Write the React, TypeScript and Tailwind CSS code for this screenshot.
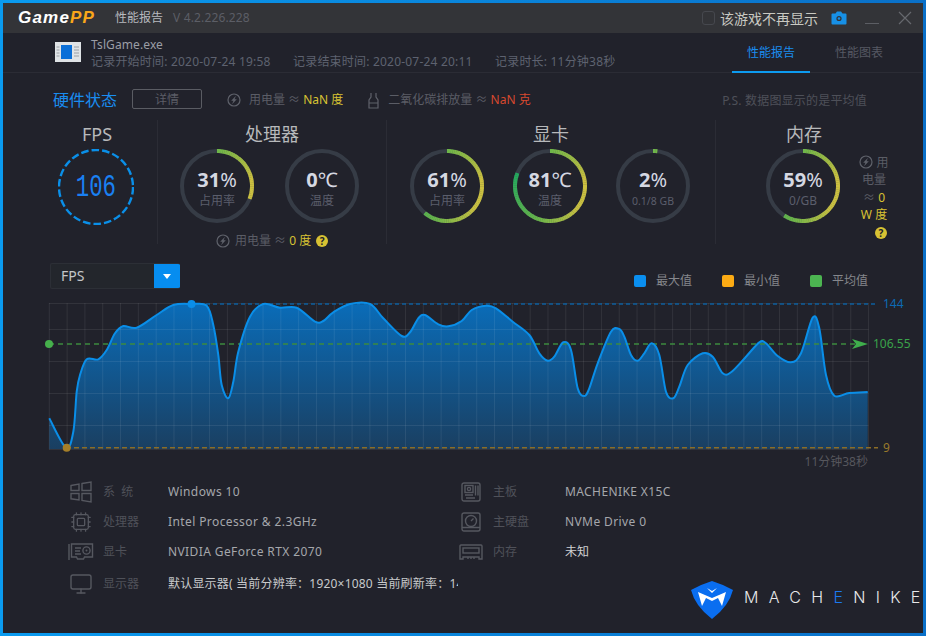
import { Cpu, Monitor } from "lucide-react";
import type { ReactNode } from "react";

const font = "font-['Noto_Sans','Noto_Sans_CJK_SC',sans-serif]";

// chart points, in page coordinates
const pts: [number, number][] = [
  [49.3, 418.3], [66, 447.7], [73.3, 431.7], [76.7, 391.7], [80, 375], [86.7, 359.3], [98.3, 359.3], [106.7, 350],
  [115, 333.3], [123.3, 326], [136.7, 327.7], [156.7, 315], [173.3, 305], [191.7, 304], [206.7, 305.7], [213.3, 325],
  [218.3, 355], [221.7, 385], [228.3, 398.3], [233.3, 381.7], [238.3, 351.7], [250, 316.7], [263.3, 304], [280, 307.7],
  [296.7, 307.7], [315, 321.7], [323.3, 321], [333.3, 312.3], [350, 304], [370, 304], [383.3, 318.3], [401.7, 336],
  [410, 332.3], [418.3, 318.3], [425, 315], [438.3, 324.3], [448.3, 326.3], [461.7, 321], [471.7, 310], [486, 305.7],
  [496, 308.3], [512.7, 321.7], [529.3, 335], [539.3, 353.3], [547.7, 360.7], [554.3, 356.7], [563.3, 342.3], [571, 350],
  [577.7, 388.3], [584.3, 396], [589.3, 388.3], [597.7, 363.3], [611, 331.7], [619.3, 329], [624.3, 336.7], [631, 355],
  [637.7, 360.7], [644.3, 353.3], [651.7, 343.3], [659.3, 355], [666, 391.7], [673.3, 398.3], [679.3, 386.7], [687.7, 365],
  [702.7, 353.3], [712.7, 356.7], [722.7, 373.3], [731, 372.3], [746, 356.7], [759.3, 342.3], [766, 343.3], [777.7, 356],
  [791, 362.3], [801, 353.3], [812.7, 317.7], [819.3, 328.3], [826, 375], [834.3, 395.7], [849.3, 393], [867.7, 392],
];

function smooth(p: [number, number][]) {
  let d = `M${p[0][0]} ${p[0][1]}`;
  for (let i = 0; i < p.length - 1; i++) {
    const a = p[Math.max(i - 1, 0)], b = p[i], c = p[i + 1], e = p[Math.min(i + 2, p.length - 1)];
    const c1 = [b[0] + (c[0] - a[0]) / 6, b[1] + (c[1] - a[1]) / 6];
    const c2 = [c[0] - (e[0] - b[0]) / 6, c[1] - (e[1] - b[1]) / 6];
    d += ` C${c1[0].toFixed(1)} ${c1[1].toFixed(1)} ${c2[0].toFixed(1)} ${c2[1].toFixed(1)} ${c[0]} ${c[1]}`;
  }
  return d;
}

const stops: [number, number[]][] = [
  [0, [110, 182, 74]], [0.22, [205, 192, 64]], [0.36, [200, 192, 66]], [0.55, [105, 181, 75]], [0.82, [30, 168, 95]], [1, [30, 168, 95]],
];

function ringColor(t: number) {
  for (let i = 0; i < stops.length - 1; i++) {
    const [a, ca] = stops[i], [b, cb] = stops[i + 1];
    if (t <= b) {
      const k = (t - a) / (b - a);
      return `rgb(${ca.map((v, j) => Math.round(v + (cb[j] - v) * k)).join(",")})`;
    }
  }
  return "rgb(30,168,95)";
}

function Ring({ pct, children }: { pct: number; children: ReactNode }) {
  const r = 35;
  const n = Math.max(1, Math.round(pct * 1.2));
  const at = (t: number) => {
    const a = t * Math.PI * 2 - Math.PI / 2;
    return `${(37 + r * Math.cos(a)).toFixed(2)} ${(37 + r * Math.sin(a)).toFixed(2)}`;
  };
  return (
    <div className="relative h-[74px] w-[74px] shrink-0">
      <svg width="74" height="74" viewBox="0 0 74 74" className="block">
        <circle cx="37" cy="37" r={r} fill="none" stroke="#363c46" strokeWidth="4" />
        {pct > 0 && Array.from({ length: n }, (_, i) => {
          const t0 = (i / n) * (pct / 100), t1 = ((i + 1.15) / n) * (pct / 100);
          return <path key={i} d={`M${at(t0)} A${r} ${r} 0 0 1 ${at(Math.min(t1, pct / 100))}`} fill="none" stroke={ringColor(t0)} strokeWidth="4" />;
        })}
      </svg>
      <div className="absolute inset-0 flex flex-col items-center pt-[18px]">{children}</div>
    </div>
  );
}

function Val({ n, unit, sub, subClass = "text-[12px]" }: { n: string; unit: string; sub: string; subClass?: string }) {
  return (
    <>
      <div className="h-[26px] text-[20px] leading-[26px] text-[#d5d8e2]">
        <span className="font-bold">{n}</span>
        <span>{unit}</span>
      </div>
      <div className={`leading-[16px] text-[#5b5e6c] ${subClass}`}>{sub}</div>
    </>
  );
}

function Bolt() {
  return (
    <svg width="14" height="14" viewBox="0 0 14 14" className="inline-block shrink-0 align-[-2px]">
      <circle cx="7" cy="7" r="6" fill="none" stroke="#5f626b" strokeWidth="1.2" />
      <path d="M9 2.8 4.2 7.8h2.3L5 11.2 9.8 6.2H7.5z" fill="#5f626b" />
    </svg>
  );
}

function Help() {
  return (
    <span className="inline-flex h-[12px] w-[12px] items-center justify-center rounded-full bg-[#d8c233] text-[10px] font-bold leading-none text-[#21222b]">?</span>
  );
}

function Heading({ children, className }: { children: ReactNode; className: string }) {
  return <div className={`h-[28px] text-center text-[18px] leading-[28px] text-[#b7b9bb] ${className}`}>{children}</div>;
}

const line = { fill: "none", stroke: "#565860", strokeWidth: 1.4 };

function WinIcon() {
  return (
    <svg width="24" height="22" viewBox="0 0 24 22">
      <path d="M2 4.5 10 3v6.5H2zM13 2.5 22 1v8.5h-9zM2 12.5h8V19l-8-1.2zM13 12.5h9V21l-9-1.5z" {...line} />
    </svg>
  );
}

function GpuIcon() {
  return (
    <svg width="26" height="18" viewBox="0 0 26 18">
      <path d="M1 1v16M3.5 1h21v13h-8l-1 2h-6l-1-2h-5z" {...line} />
      <circle cx="18.5" cy="7.5" r="3.6" {...line} />
      <circle cx="18.5" cy="7.5" r="1" fill="#565860" />
      <path d="M7 5h6M7 8h5M7 11h6" {...line} />
    </svg>
  );
}

function BoardIcon() {
  return (
    <svg width="20" height="20" viewBox="0 0 20 20">
      <rect x="1" y="1" width="18" height="18" rx="2" {...line} />
      <rect x="4" y="3.5" width="8" height="7" {...line} />
      <circle cx="8" cy="7" r="1.6" {...line} />
      <path d="M14.5 3.5v10M17 3.5v10M4 13h8M5 16h9" {...line} />
    </svg>
  );
}

function DiskIcon() {
  return (
    <svg width="20" height="20" viewBox="0 0 20 20">
      <rect x="1" y="1" width="18" height="18" rx="2" {...line} />
      <circle cx="10" cy="9" r="5.5" {...line} />
      <path d="M10 9l2.5-2.5M1 15.5h18" {...line} />
    </svg>
  );
}

function RamIcon() {
  return (
    <svg width="24" height="16" viewBox="0 0 24 16">
      <path d="M1 15V2a1 1 0 0 1 1-1h20a1 1 0 0 1 1 1v13h-3v-2H4v2z" {...line} />
      <rect x="4" y="4" width="16" height="5" {...line} />
      <path d="M9 13v2M12 13v2M15 13v2" {...line} />
    </svg>
  );
}

function InfoRow({ icon, label, value, labelWidth = "w-[65px]", valueClass = "text-[#a5a7ab] tracking-[.4px]", height = "h-[30px]" }: { icon: ReactNode; label: string; value: string; labelWidth?: string; valueClass?: string; height?: string }) {
  return (
    <div className={`flex items-center ${height}`}>
      <div className="flex w-[22px] justify-center [&>svg]:shrink-0">{icon}</div>
      <div className={`ml-[11px] whitespace-pre text-[12px] text-[#4f5159] ${labelWidth}`}>{label}</div>
      <div className={`w-[290px] overflow-hidden whitespace-nowrap text-[12px] ${valueClass}`}>{value}</div>
    </div>
  );
}

function Legend({ color, label }: { color: string; label: string }) {
  return (
    <div className="flex w-[88px] items-center">
      <span className={`h-[12px] w-[12px] rounded-[2px] ${color}`} />
      <span className="ml-[10px] text-[12px] text-[#85878c]">{label}</span>
    </div>
  );
}

function Chart() {
  const d = smooth(pts);
  const vs = Array.from({ length: 47 }, (_, i) => 49.3 + i * 17.81);
  return (
    <svg width="920" height="177" viewBox="3 293 920 177" className={`block ${font}`}>
      <defs>
        <linearGradient id="fill" x1="0" y1="304" x2="0" y2="449" gradientUnits="userSpaceOnUse">
          <stop offset="0" stopColor="#0a6cb8" />
          <stop offset="1" stopColor="#1a3f61" />
        </linearGradient>
      </defs>
      <path d={`${d} L867.7 449 L49.3 449Z`} fill="url(#fill)" />
      {vs.map((x) => (
        <line key={x} x1={x} x2={x} y1="303" y2="449.5" stroke="#fff" strokeOpacity="0.08" />
      ))}
      {[303.5, 329.5, 361.5, 393.5, 425.5, 449.5].map((y) => (
        <line key={y} x1="49" x2="868.5" y1={y} y2={y} stroke="#fff" strokeOpacity="0.08" />
      ))}
      <line x1="192" x2="878" y1="304" y2="304" stroke="#0d5f9e" strokeWidth="1.5" strokeDasharray="4 3" />
      <line x1="49" x2="868" y1="344" y2="344" stroke="#3c8b3f" strokeWidth="1.5" strokeDasharray="5 4" />
      <line x1="66" x2="878" y1="447.7" y2="447.7" stroke="#8c6d26" strokeWidth="1.5" strokeDasharray="5 3" />
      <path d={d} fill="none" stroke="#0a8ee8" strokeWidth="2" />
      <circle cx="49" cy="344" r="4" fill="#46b04c" />
      <circle cx="191.5" cy="304" r="4" fill="#0a8ee8" />
      <circle cx="66.7" cy="447.7" r="4" fill="#a57f29" />
      <path d="M852 339 868 344 852 349 856 344Z" fill="#3fae4c" />
      <text x="883" y="308" fontSize="12" fill="#0c6ab5">144</text>
      <text x="873" y="348" fontSize="12" fill="#3aa24a">106.55</text>
      <text x="883" y="452" fontSize="12" fill="#9a7a2b">9</text>
      <text x="868" y="466" fontSize="12" fill="#56575d" textAnchor="end">11分钟38秒</text>
    </svg>
  );
}

function Shield() {
  return (
    <svg width="42" height="38" viewBox="0 0 42 38" className="shrink-0">
      <path d="M21 0Q31 3 42 9 38 25 21 38 4 25 0 9 11 3 21 0Z" fill="#0a6ef0" />
      <path d="M7 11 21 17 35 11 31 25 27 17 21 20 15 17 11 25Z" fill="#fff" />
      <path d="M16 7 21 10 26 7 21 12Z" fill="#fff" />
    </svg>
  );
}

export default function App() {
  return (
    <div className={`h-[636px] w-[926px] bg-gradient-to-r from-[#0a9bf0] to-[#0a70c8] p-[3px] ${font}`}>
      <div className="h-[630px] w-[920px] overflow-hidden bg-[#21222b]">
        {/* title bar */}
        <div className="flex h-[30px] items-center bg-[#333438] pl-[15px]">
          <div className="w-[97px] whitespace-nowrap font-['Liberation_Sans',sans-serif] text-[17px] font-bold italic tracking-[1.2px] text-white">
            Game<span className="text-[#f9a61a]">PP</span>
          </div>
          <div className="text-[12px] text-[#b7b9bf]">性能报告</div>
          <div className="ml-[10px] text-[12px] tracking-[.15px] text-[#5c5e66]">V 4.2.226.228</div>
          <div className="ml-auto flex items-center">
            <span className="h-[14px] w-[13px] rounded-[3px] border border-[#46484e]" />
            <span className="ml-[5px] w-[98px] whitespace-nowrap text-[14px] text-[#c9c9c2]">该游戏不再显示</span>
            <svg width="16" height="14" viewBox="0 0 16 14" className="ml-[13px]">
              <path d="M1.5 2.5h3L6 .5h4l1.5 2h3a1 1 0 0 1 1 1v9a1 1 0 0 1-1 1h-13a1 1 0 0 1-1-1v-9a1 1 0 0 1 1-1z" fill="#1790e6" />
              <circle cx="8" cy="7.5" r="2.6" fill="#333438" />
              <circle cx="8" cy="7.5" r="1.3" fill="#1790e6" />
            </svg>
            <svg width="14" height="14" viewBox="0 0 14 14" className="ml-[18px]">
              <line x1="0" x2="14" y1="12.5" y2="12.5" stroke="#5c5e64" />
            </svg>
            <svg width="14" height="14" viewBox="0 0 14 14" className="ml-[19px] mr-[11px]">
              <path d="M1 1 13 13M13 1 1 13" stroke="#66686e" strokeWidth="1.2" />
            </svg>
          </div>
        </div>

        {/* record info */}
        <div className="flex h-[40px] border-b border-[#2b2c35]">
          <svg width="26" height="20" viewBox="0 0 26 20" className="ml-[52px] mt-[9px] shrink-0">
            <rect width="26" height="20" fill="#dfe3e6" />
            <rect x="6" y="3" width="11" height="14" fill="#0a6fd8" />
            <path d="M1.5 5h3M1.5 8h3M1.5 11h3M1.5 14h3M19 5h5M19 8h5M19 11h5M19 14h5" stroke="#9aa0a6" />
          </svg>
          <div className="ml-[10px] pt-[4px]">
            <div className="text-[12px] leading-[16px] tracking-[.1px] text-[#9b9ea6]">TslGame.exe</div>
            <div className="mt-[1px] flex text-[12px] leading-[16px] tracking-[.2px] text-[#5e6270]">
              <span className="w-[202px]">记录开始时间: 2020-07-24 19:58</span>
              <span className="w-[202px]">记录结束时间: 2020-07-24 20:11</span>
              <span>记录时长: 11分钟38秒</span>
            </div>
          </div>
          <div className="ml-auto flex">
            <div className="flex h-[40px] w-[78px] items-center justify-center border-b-2 border-[#0d9bf0] pt-[2px] text-[12px] text-[#1a8df0]">性能报告</div>
            <div className="ml-[25px] mr-[40px] flex h-[38px] items-center pt-[2px] text-[12px] text-[#565963]">性能图表</div>
          </div>
        </div>

        {/* hardware status */}
        <div className="flex h-[47px] items-start pl-[50px] pt-[16px] text-[12px] text-[#5b5d66]">
          <div className="w-[79px] pt-[1px] text-[16px] leading-[20px] text-[#1a8df0]">硬件状态</div>
          <div className="flex h-[20px] w-[70px] items-center justify-center rounded-[2px] border border-[#5a5c63] pt-[1px]">详情</div>
          <div className="ml-[25px] flex h-[20px] items-center pt-[2px]">
            <Bolt />
            <span className="ml-[8px]">用电量 ≈ <span className="text-[#d8c233]">NaN 度</span></span>
          </div>
          <div className="ml-[25px] flex h-[20px] items-center pt-[2px]">
            <svg width="11" height="17" viewBox="0 0 11 17">
              <path d="M3 1v4L1 8v8h9V8L8 5V1M1 11h9" fill="none" stroke="#5f626b" strokeWidth="1.2" />
            </svg>
            <span className="ml-[9px]">二氧化碳排放量 ≈ <span className="text-[#d8492f]">NaN 克</span></span>
          </div>
          <div className="ml-auto mr-[56px] h-[20px] pt-[2px] leading-[20px] tracking-[.2px] text-[#4e5059]">P.S. 数据图显示的是平均值</div>
        </div>

        {/* stats */}
        <div className="flex h-[124px]">
          <div className="h-[124px] w-[155px] border-r border-[#2b2c35] pl-[55px]">
            <Heading className="w-[78px]">FPS</Heading>
            <div className="relative mt-[1px] flex h-[76px] w-[76px] items-center justify-center">
              <svg width="76" height="76" viewBox="0 0 76 76" className="absolute inset-0">
                <circle cx="38" cy="38" r="37" fill="none" stroke="#0a8fe8" strokeWidth="2.4" strokeDasharray="7.6 3" />
              </svg>
              <span className="scale-x-[.72] font-['Liberation_Mono',monospace] text-[31px] leading-none text-[#1a80f2]">106</span>
            </div>
          </div>
          <div className="h-[124px] w-[229px] border-r border-[#2b2c35] pl-[22px]">
            <Heading className="w-[184px]">处理器</Heading>
            <div className="mt-[1px] flex gap-[31px]">
              <Ring pct={31}><Val n="31" unit="%" sub="占用率" /></Ring>
              <Ring pct={0}><Val n="0" unit="℃" sub="温度" /></Ring>
            </div>
            <div className="ml-[36px] mt-[10px] flex items-center text-[12px] leading-[16px] text-[#5b5d66]">
              <Bolt />
              <span className="ml-[5px]">用电量 ≈ <span className="text-[#d8c233]">0 度</span></span>
              <span className="ml-[5px] flex"><Help /></span>
            </div>
          </div>
          <div className="h-[124px] w-[329px] border-r border-[#2b2c35] pl-[23px]">
            <Heading className="w-[282px]">显卡</Heading>
            <div className="mt-[1px] flex gap-[29px]">
              <Ring pct={61}><Val n="61" unit="%" sub="占用率" /></Ring>
              <Ring pct={81}><Val n="81" unit="℃" sub="温度" /></Ring>
              <Ring pct={2}><Val n="2" unit="%" sub="0.1/8 GB" subClass="text-[10.5px]" /></Ring>
            </div>
          </div>
          <div className="flex h-[124px] flex-1 pl-[50px]">
            <div>
              <Heading className="w-[76px]">内存</Heading>
              <div className="mt-[1px]">
                <Ring pct={59}><Val n="59" unit="%" sub="0/GB" /></Ring>
              </div>
            </div>
            <div className="ml-[15px] mt-[34px] w-[34px] text-center text-[12px] leading-[17.3px] text-[#5b5d66]">
              <Bolt /> 用电量 ≈ <span className="text-[#d8c233]">0 W 度</span> <span className="inline-flex pl-[14px] align-[-1px]"><Help /></span>
            </div>
          </div>
        </div>

        {/* selector + legend */}
        <div className="mt-[19px] flex h-[26px] pl-[47px]">
          <div className="flex h-[26px] w-[130px] overflow-hidden rounded-[2px] border border-r-0 border-[#2c2f36] bg-[#23262c]">
            <div className="flex-1 pl-[10px] text-[14px] leading-[24px] text-[#c5c6c8]">FPS</div>
            <div className="flex w-[26px] items-center justify-center bg-[#068df0]">
              <svg width="8" height="5" viewBox="0 0 8 5"><path d="M0 0h8L4 5z" fill="#fff" /></svg>
            </div>
          </div>
          <div className="ml-auto flex items-center pt-[9px]">
            <Legend color="bg-[#0a8ff0]" label="最大值" />
            <Legend color="bg-[#fcab14]" label="最小值" />
            <div className="w-[79px]"><Legend color="bg-[#4cb551]" label="平均值" /></div>
            <div className="w-[34px]" />
          </div>
        </div>

        {/* chart */}
        <div className="mt-[4px]">
          <Chart />
        </div>

        {/* system info */}
        <div className="mt-[7px] grid grid-cols-[390px_1fr] pl-[67px]">
          <InfoRow icon={<WinIcon />} label="系  统" value="Windows 10" />
          <InfoRow icon={<BoardIcon />} label="主板" labelWidth="w-[72px]" value="MACHENIKE X15C" />
          <InfoRow icon={<Cpu size={22} color="#565860" strokeWidth={1.4} />} label="处理器" value="Intel Processor & 2.3GHz" />
          <InfoRow icon={<DiskIcon />} label="主硬盘" labelWidth="w-[72px]" value="NVMe Drive 0" />
          <InfoRow icon={<GpuIcon />} label="显卡" value="NVIDIA GeForce RTX 2070" />
          <InfoRow icon={<RamIcon />} label="内存" labelWidth="w-[72px]" value="未知" valueClass="text-[#d0d1d3]" />
          <InfoRow icon={<Monitor size={24} color="#565860" strokeWidth={1.4} />} label="显示器" value="默认显示器( 当前分辨率：1920×1080 当前刷新率：144" valueClass="text-[#c8cacc] tracking-[.2px]" height="h-[34px]" />
          <div className="flex items-start whitespace-nowrap pl-[231px] pt-[14px]">
            <Shield />
            <span className="ml-[11px] mt-[7px] font-['Inter',sans-serif] text-[16px] font-light leading-[18px] tracking-[10.3px] text-[#e8e9ea]">
              MACH<span className="text-[#1c78f0]">E</span>NIKE
            </span>
          </div>
        </div>
      </div>
    </div>
  );
}
